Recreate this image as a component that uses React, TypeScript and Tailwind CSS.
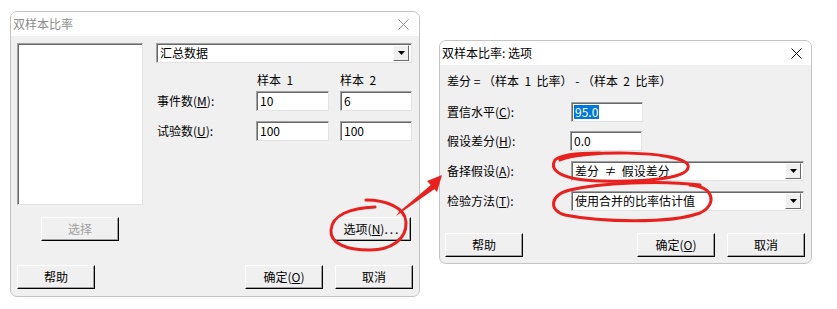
import React from 'react';

const font = { fontFamily: '"Noto Sans CJK SC", "Noto Sans", sans-serif' };

function CloseX({ color }: { color: string }) {
    return (
        <svg width="11" height="11" viewBox="0 0 11 11">
            <path d="M0.5 0.5 L10.5 10.5 M10.5 0.5 L0.5 10.5" stroke={color} strokeWidth="1" fill="none" />
        </svg>
    );
}

function Btn({ children, disabled, className = '' }: { children: React.ReactNode; disabled?: boolean; className?: string }) {
    return (
        <div
            className={
                'w-[78px] h-[24px] flex items-center justify-center bg-[#f0f0f0] border border-t-white border-l-white border-r-black border-b-black shadow-[inset_-1px_-1px_0_#a0a0a0] text-[12px] leading-none ' +
                (disabled ? 'text-[#a0a0a0] ' : 'text-black ') +
                className
            }
        >
            {children}
        </div>
    );
}

function Field({ value, w, selected }: { value: string; w: string; selected?: boolean }) {
    return (
        <div className={w + ' h-[20px] bg-white border border-t-[#a0a0a0] border-l-[#a0a0a0] border-r-[#e3e3e3] border-b-[#e3e3e3] shadow-[inset_1px_1px_0_#696969] flex items-center pl-[2px] text-[12px] leading-none'}>
            {selected ? <span className="bg-[#0078d7] text-white px-[1px] py-[1px]">{value}</span> : <span className="pl-[1px]">{value}</span>}
        </div>
    );
}

function Combo({ value, w }: { value: string; w: string }) {
    return (
        <div className={w + ' h-[20px] bg-white border border-t-[#a0a0a0] border-l-[#a0a0a0] border-r-[#e3e3e3] border-b-[#e3e3e3] shadow-[inset_1px_1px_0_#696969] flex items-center pl-[3px] pr-[2px] text-[12px] leading-none'}>
            <span className="flex-1 whitespace-pre">{value}</span>
            <div className="w-[16px] h-[16px] bg-[#f0f0f0] border border-t-white border-l-white border-r-[#696969] border-b-[#696969] flex items-center justify-center">
                <svg width="7" height="4" viewBox="0 0 7 4">
                    <path d="M0 0 H7 L3.5 4 Z" fill="#000" />
                </svg>
            </div>
        </div>
    );
}

function Label({ text, k }: { text: string; k: string }) {
    return (
        <span>
            {text}(<span className="underline">{k}</span>):
        </span>
    );
}

export default function App() {
    return (
        <div className="relative w-[837px] h-[309px] bg-white overflow-hidden text-black" style={font}>
            <div className="flex items-start pl-[10px]">
                {/* Main dialog */}
                <div className="mt-[11px] w-[410px] border border-[#c4c4c4] rounded-[7px] overflow-hidden bg-[#f0f0f0]">
                    <div className="h-[24px] bg-white flex items-center justify-between pl-[2px] pr-[10px]">
                        <span className="text-[12px] text-[#8c8c8c]">双样本比率</span>
                        <CloseX color="#8c8c8c" />
                    </div>
                    <div className="flex flex-col pl-[6px] pr-[6px] pt-[7px] pb-[7px]">
                        <div className="flex">
                            <div className="w-[126px] flex flex-col">
                                <div className="h-[162px] bg-white border border-t-[#a0a0a0] border-l-[#a0a0a0] border-r-[#e3e3e3] border-b-[#e3e3e3] shadow-[inset_1px_1px_0_#696969]" />
                                <Btn disabled className="mt-[12px] ml-[24px]">选择</Btn>
                            </div>
                            <div className="ml-[13px] w-[256px] flex flex-col">
                                <Combo value="汇总数据" w="w-[256px]" />
                                <div className="flex mt-[10px] h-[14px] items-center text-[12px] whitespace-pre">
                                    <span className="w-[100px]" />
                                    <span className="w-[84px] pl-[1px]">样本  1</span>
                                    <span>样本  2</span>
                                </div>
                                <div className="flex mt-[4px] items-center text-[12px]">
                                    <span className="w-[100px] pl-[1px]"><Label text="事件数" k="M" /></span>
                                    <Field value="10" w="w-[73px]" />
                                    <div className="ml-[11px]"><Field value="6" w="w-[72px]" /></div>
                                </div>
                                <div className="flex mt-[10px] items-center text-[12px]">
                                    <span className="w-[100px] pl-[1px]"><Label text="试验数" k="U" /></span>
                                    <Field value="100" w="w-[73px]" />
                                    <div className="ml-[11px]"><Field value="100" w="w-[72px]" /></div>
                                </div>
                                <div className="mt-auto self-end mr-[1px]">
                                    <Btn>选项(<span className="underline">N</span>)<span className="tracking-[2px]">...</span></Btn>
                                </div>
                            </div>
                        </div>
                        <div className="flex mt-[24px]">
                            <Btn>帮助</Btn>
                            <Btn className="ml-auto">确定(<span className="underline">O</span>)</Btn>
                            <Btn className="ml-[12px]">取消</Btn>
                        </div>
                    </div>
                </div>

                {/* Options dialog */}
                <div className="ml-[19px] mt-[40px] w-[373px] border border-[#c4c4c4] rounded-[7px] overflow-hidden bg-[#f0f0f0]">
                    <div className="h-[24px] bg-white flex items-center justify-between pl-[2px] pr-[9px]">
                        <span className="text-[12px]">双样本比率: 选项</span>
                        <CloseX color="#000" />
                    </div>
                    <div className="flex flex-col pl-[5px] pr-[6px] pb-[6px] text-[12px]">
                        <div className="mt-[9px] ml-[2px] h-[14px] flex items-center whitespace-pre">差分 = （样本  1  比率） - （样本  2  比率）</div>
                        <div className="flex items-center mt-[14px]">
                            <span className="w-[126px] pl-[2px]"><Label text="置信水平" k="C" /></span>
                            <Field value="95.0" w="w-[72px]" selected />
                        </div>
                        <div className="flex items-center mt-[9px]">
                            <span className="w-[125px] pl-[2px]"><Label text="假设差分" k="H" /></span>
                            <Field value="0.0" w="w-[72px]" />
                        </div>
                        <div className="flex items-center mt-[10px]">
                            <span className="w-[126px] pl-[2px]"><Label text="备择假设" k="A" /></span>
                            <Combo value="差分  ≠  假设差分" w="w-[233px]" />
                        </div>
                        <div className="flex items-center mt-[10px]">
                            <span className="w-[126px] pl-[2px]"><Label text="检验方法" k="T" /></span>
                            <Combo value="使用合并的比率估计值" w="w-[233px]" />
                        </div>
                        <div className="flex mt-[22px]">
                            <Btn>帮助</Btn>
                            <Btn className="ml-auto">确定(<span className="underline">O</span>)</Btn>
                            <Btn className="ml-[12px]">取消</Btn>
                        </div>
                    </div>
                </div>
            </div>

            {/* Red hand-drawn annotations */}
            <svg className="absolute inset-0 pointer-events-none" width="837" height="309" viewBox="0 0 837 309">
                <g fill="none" stroke="#e8201e" strokeWidth="3" strokeLinecap="round">
                    <path d="M366 200 C385 200 405 207 406 222 C407 240 390 250 370 250 C345 250 330 243 331 230 C332 215 350 208 375 207" />
                    <path d="M560 160 C580 150 680 150 688 165 C692 178 650 182 600 181 C565 180 548 172 555 160 C560 155 580 153 600 153" />
                    <path d="M690 185 C715 187 717 205 700 213 C670 224 600 222 565 215 C548 210 550 195 570 190 C600 183 660 180 700 185" />
                </g>
                <polygon points="396,216 399,212 432,184 436,188" fill="#e8201e" />
                <polygon points="442,175 427,181 437,192" fill="#e8201e" />
            </svg>
        </div>
    );
}
